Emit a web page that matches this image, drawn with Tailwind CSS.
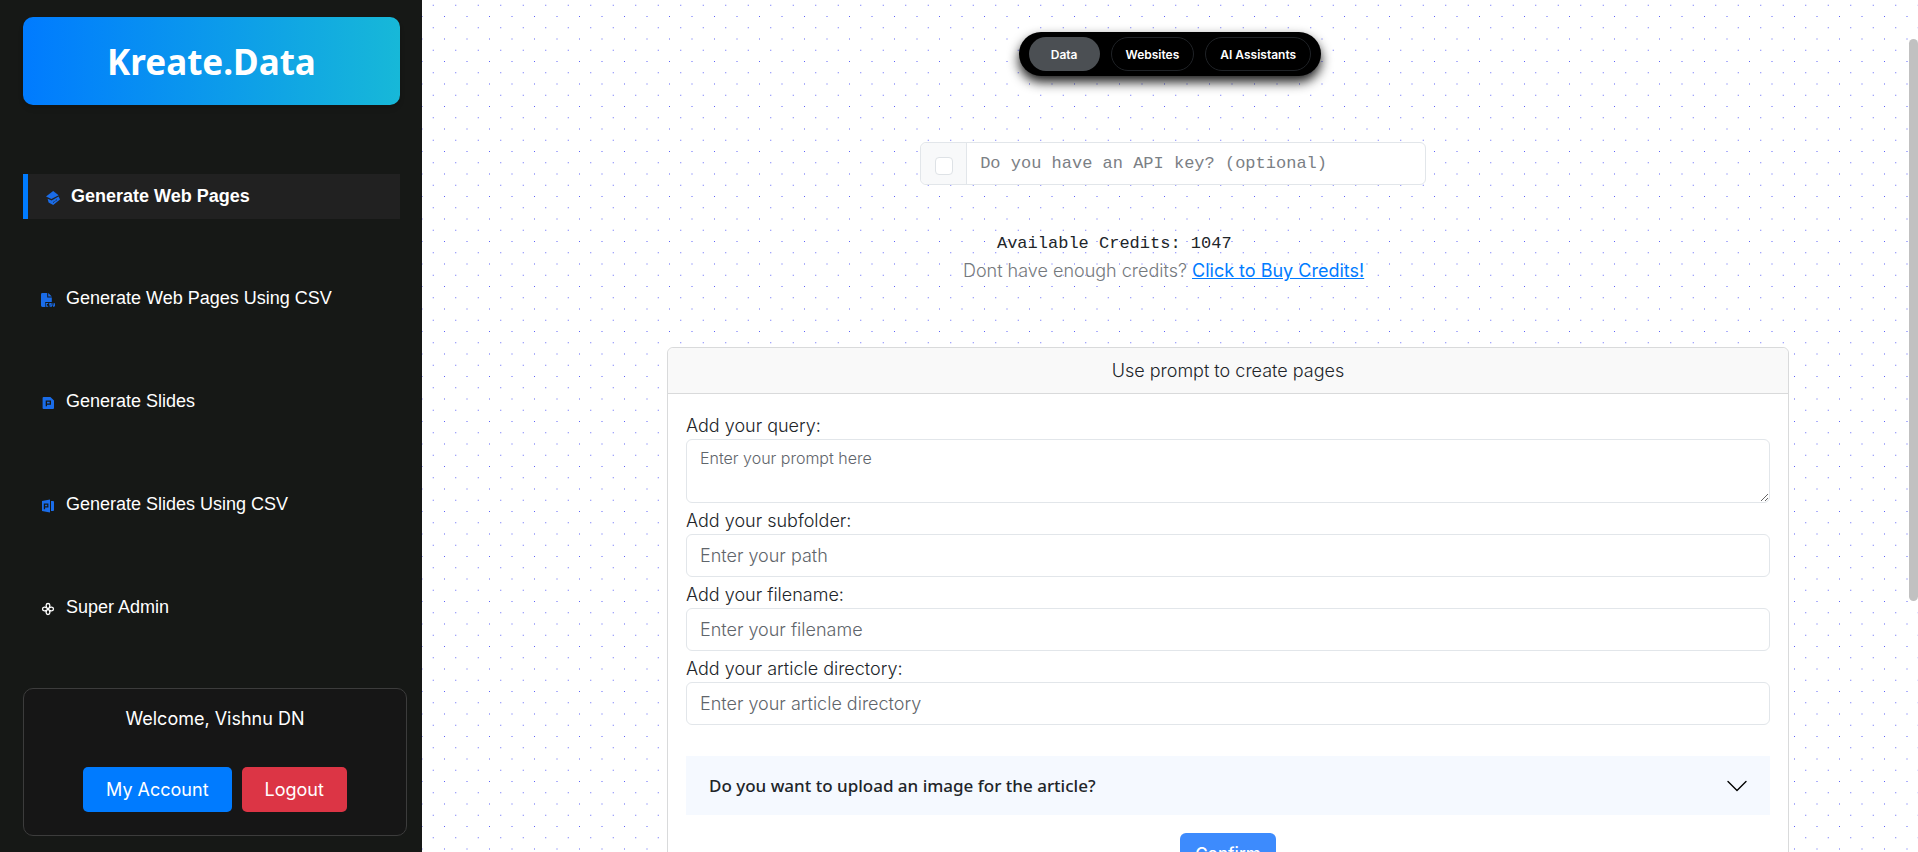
<!DOCTYPE html>
<html lang="en">
<head>
<meta charset="utf-8">
<title>Kreate.Data</title>
<script src="https://cdn.jsdelivr.net/npm/@tailwindcss/browser@4"></script>
</head>
<body class="flex h-screen overflow-hidden bg-white font-['Inter',sans-serif] text-[18px] leading-[27px] font-light text-[#212529]">

<aside class="flex w-[22%] shrink-0 flex-col bg-[#161816] pt-[17px] pr-[15px] pb-4 pl-[23px] text-white">
  <h1 class="mr-[7px] flex h-[88px] items-center justify-center rounded-[10px] bg-linear-to-r/srgb from-[#007bff] to-[#17b8d8] font-['Noto_Sans',sans-serif] text-[35px] font-bold shadow-md">Kreate.Data</h1>

  <nav class="mt-[69px] mr-[7px] flex flex-col gap-[58px] font-['Liberation_Sans',sans-serif] font-normal">
    <a href="#" class="-mb-px flex h-[45px] items-center gap-[11px] border-l-[5px] border-[#007bff] bg-[#212121] pl-[18px] font-bold">
      <svg class="mt-[3px] size-[14px] text-[#1a6ce8]" viewBox="0 0 14 14" fill="currentColor"><path d="M7.200 0 12.600 4.200 5.400 8 0 5.600z"/><path d="M1.600 7.800 5.600 9.400 12.600 5.400 14 8.600 7.200 14 2.600 11.400z"/><path d="M7 11.600 11.400 8.400" stroke="#212121" stroke-width=".8" stroke-dasharray="2 1"/></svg>
      Generate Web Pages
    </a>
    <a href="#" class="flex h-[45px] items-center gap-[11px] pl-[18px]">
      <svg class="mt-[3px] size-[14px] text-[#1a6ce8]" viewBox="0 0 14 14" fill="currentColor"><path d="M1.400 0H6.200V4.400H10.800V9H4.200V14H1.400Q0 14 0 12.600V1.400Q0 0 1.400 0z"/><path d="M7.200 0 10.800 3.500H7.200z"/><path d="M7.200 10.500H5.300V13.300H7.200M10.600 10.500H8.800V11.900H10.400V13.300H8.600M12 10.300V12.400L12.800 13.400 13.600 12.400V10.300" fill="none" stroke="currentColor" stroke-width="1.100"/></svg>
      Generate Web Pages Using CSV
    </a>
    <a href="#" class="flex h-[45px] items-center gap-[11px] pl-[18px]">
      <svg class="mt-[3px] size-[14px] text-[#1a6ce8]" viewBox="0 0 14 14" fill="currentColor"><path fill-rule="evenodd" d="M2.600 1H9.400L13 4.400V12Q13 13 12 13H2.600Q1.600 13 1.600 12V2Q1.600 1 2.600 1zM4.700 4.400V10.300H6V8.700H10V4.400zM6 5.700H8.700V7.400H6z"/></svg>
      Generate Slides
    </a>
    <a href="#" class="flex h-[45px] items-center gap-[11px] pl-[18px]">
      <svg class="mt-[3px] size-[14px] text-[#1a6ce8]" viewBox="0 0 14 14" fill="currentColor"><path fill-rule="evenodd" d="M9 .6V13.400L1 12V2zM2.800 4.500V10.200H4.100V8.600H7.400V4.500zM4.100 5.700H6.200V7.300H4.100z"/><path d="M10 1.900H12Q13 1.900 13 2.900V11.100Q13 12.100 12 12.100H10z"/></svg>
      Generate Slides Using CSV
    </a>
    <a href="#" class="flex h-[45px] items-center gap-[11px] pl-[18px]">
      <svg class="mt-[3px] size-[14px] text-white" viewBox="0 0 14 14" fill="none" stroke="currentColor" stroke-width="1.300"><path d="M7 7C4 4.500 5 1.500 7 1.500S10 4.500 7 7C9.500 4 12.500 5 12.500 7S9.500 10 7 7C10 9.500 9 12.500 7 12.500S4 9.500 7 7C4.500 10 1.500 9 1.500 7S4.500 4 7 7z"/></svg>
      Super Admin
    </a>
  </nav>

  <section class="mt-[58px] flex h-[148px] shrink-0 flex-col items-center rounded-[10px] border border-[#3c3c3c] bg-[#161616] pt-4 font-normal">
    <p>Welcome, Vishnu DN</p>
    <div class="mt-[35px] flex gap-[10px]">
      <button type="button" class="h-[45px] rounded-[5px] bg-[#007bff] px-[23px]">My Account</button>
      <button type="button" class="h-[45px] rounded-[5px] bg-[#dc3545] px-[23px]">Logout</button>
    </div>
  </section>
</aside>

<main class="relative min-w-0 flex-1 overflow-hidden">
  <svg class="absolute inset-0 -z-10 size-full" aria-hidden="true">
    <defs>
      <pattern id="dots" width="45" height="45" patternUnits="userSpaceOnUse" x="22" y="16">
        <g fill="#5c62f8">
          <rect width="1" height="1"/><rect x="22.5" width="1" height="1"/>
          <rect y="22.5" width="1" height="1"/><rect x="22.5" y="22.5" width="1" height="1"/>
          <rect x="11.25" y="11.25" width="1" height="1"/><rect x="33.75" y="11.25" width="1" height="1"/>
          <rect x="11.25" y="33.75" width="1" height="1"/><rect x="33.75" y="33.75" width="1" height="1"/>
        </g>
      </pattern>
    </defs>
    <rect width="100%" height="100%" fill="url(#dots)"/>
  </svg>

  <div class="mx-auto mt-8 flex h-11 w-fit items-center gap-[11px] rounded-full bg-black px-[10px] text-[12px] font-semibold text-white shadow-[0_6px_12px_rgba(0,0,0,0.9)]">
    <button type="button" class="h-[34px] rounded-full bg-[#4b4f53] px-[22px]">Data</button>
    <button type="button" class="h-[34px] rounded-full border border-[#1f2226] px-[14px]">Websites</button>
    <button type="button" class="h-[34px] rounded-full border border-[#1f2226] px-[14px]">AI Assistants</button>
  </div>

  <div class="mt-[66px] ml-[33.3%] flex h-[43px] w-[506px] rounded-md border border-[#e2e6ea] bg-white">
    <div class="flex w-[46px] shrink-0 items-center justify-center rounded-l-md border-r border-[#e2e6ea] bg-[#f8f9fa] pt-1">
      <input type="checkbox" aria-label="Use an API key" class="size-[18px] appearance-none rounded border border-[#dee2e6] bg-white">
    </div>
    <input type="text" aria-label="API key" placeholder="Do you have an API key? (optional)" class="min-w-0 flex-1 px-[13px] font-['Liberation_Mono',monospace] text-[17px] font-normal outline-none placeholder:text-[#7b8085]">
  </div>

  <div class="mx-auto mt-[45px] w-[414px]">
    <p class="pl-[34px] font-['Liberation_Mono',monospace] text-[17px] font-normal">Available Credits: 1047</p>
    <p class="whitespace-nowrap text-[#75797d]">Dont have enough credits? <a href="#" class="font-normal text-[#007bff] underline">Click to Buy Credits!</a></p>
  </div>

  <form class="mt-[63px] ml-[245px] w-3/4 rounded-md border border-[#d9dadb] bg-white">
    <h2 class="flex h-[46px] items-center justify-center rounded-t-md border-b border-[#d9dadb] bg-[#f9f9f9]">Use prompt to create pages</h2>
    <div class="flex flex-col px-[18px] pt-[18px] pb-8">
      <label for="query">Add your query:</label>
      <textarea id="query" placeholder="Enter your prompt here" class="h-[64px] resize-y rounded-md border border-[#e2e6ea] px-[13px] py-[6px] text-[16px] leading-[25px] outline-none placeholder:text-[#5f656b]"></textarea>
      <label for="subfolder" class="mt-1">Add your subfolder:</label>
      <input id="subfolder" type="text" placeholder="Enter your path" class="h-[43px] rounded-md border border-[#e2e6ea] px-[13px] outline-none placeholder:text-[#5f656b]">
      <label for="filename" class="mt-1">Add your filename:</label>
      <input id="filename" type="text" placeholder="Enter your filename" class="h-[43px] rounded-md border border-[#e2e6ea] px-[13px] outline-none placeholder:text-[#5f656b]">
      <label for="directory" class="mt-1">Add your article directory:</label>
      <input id="directory" type="text" placeholder="Enter your article directory" class="h-[43px] rounded-md border border-[#e2e6ea] px-[13px] outline-none placeholder:text-[#5f656b]">

      <button type="button" aria-expanded="false" class="mt-[31px] flex h-[59px] items-center justify-between bg-[#f5f9ff] px-[23px] font-['Noto_Sans',sans-serif] text-[17px] font-medium">
        Do you want to upload an image for the article?
        <svg class="h-5 w-5" viewBox="0 0 20 20" fill="none" stroke="#000" stroke-width="1.400" stroke-linecap="round" stroke-linejoin="round"><path d="M1 5.500 10 14.500 19 5.500"/></svg>
      </button>
      <button type="submit" class="mt-[18px] h-[43px] self-center rounded-md bg-[#3d8bfd] px-[15px] text-[17px] font-medium text-white">Confirm</button>
    </div>
  </form>

  <div class="absolute top-[39px] right-0 h-[562px] w-[9px] rounded-[5px] bg-[#c1c1c1]"></div>
</main>
</body>
</html>
